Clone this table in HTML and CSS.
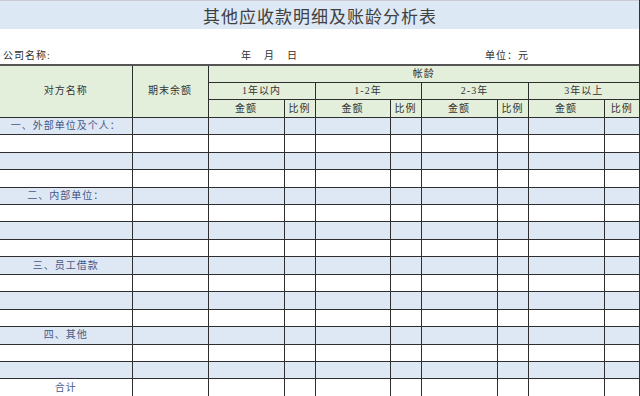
FILE: index.html
```html
<!DOCTYPE html>
<html lang="zh-CN">
<head>
<meta charset="utf-8">
<title>其他应收款明细及账龄分析表</title>
<link rel="stylesheet" href="styles.css">
</head>
<body>
<div class="sheet">
  <div class="title">其他应收款明细及账龄分析表</div>
  <div class="info">
    <span class="company">公司名称:</span>
    <span class="date"><span class="d">年</span><span class="d">月</span><span class="d">日</span></span>
    <span class="unit">单位：元</span>
  </div>
  <table class="grid">
    <colgroup>
      <col class="c-name"><col class="c-bal">
      <col class="c-amt"><col class="c-pct">
      <col class="c-amt2"><col class="c-pct">
      <col class="c-amt"><col class="c-pct">
      <col class="c-amt"><col class="c-last">
    </colgroup>
    <thead>
      <tr class="h">
        <th rowspan="3">对方名称</th>
        <th rowspan="3">期末余额</th>
        <th colspan="8" class="end">帐龄</th>
      </tr>
      <tr class="h">
        <th colspan="2">1年以内</th>
        <th colspan="2">1-2年</th>
        <th colspan="2">2-3年</th>
        <th colspan="2" class="end">3年以上</th>
      </tr>
      <tr class="h">
        <th>金额</th><th>比例</th>
        <th>金额</th><th>比例</th>
        <th>金额</th><th>比例</th>
        <th>金额</th><th class="end">比例</th>
      </tr>
    </thead>
    <tbody>
      <tr class="blue"><td class="label">一、外部单位及个人：</td><td></td><td></td><td></td><td></td><td></td><td></td><td></td><td></td><td class="end"></td></tr>
      <tr><td></td><td></td><td></td><td></td><td></td><td></td><td></td><td></td><td></td><td class="end"></td></tr>
      <tr class="blue"><td></td><td></td><td></td><td></td><td></td><td></td><td></td><td></td><td></td><td class="end"></td></tr>
      <tr><td></td><td></td><td></td><td></td><td></td><td></td><td></td><td></td><td></td><td class="end"></td></tr>
      <tr class="blue"><td class="label">二、内部单位：</td><td></td><td></td><td></td><td></td><td></td><td></td><td></td><td></td><td class="end"></td></tr>
      <tr><td></td><td></td><td></td><td></td><td></td><td></td><td></td><td></td><td></td><td class="end"></td></tr>
      <tr class="blue"><td></td><td></td><td></td><td></td><td></td><td></td><td></td><td></td><td></td><td class="end"></td></tr>
      <tr><td></td><td></td><td></td><td></td><td></td><td></td><td></td><td></td><td></td><td class="end"></td></tr>
      <tr class="blue"><td class="label">三、员工借款</td><td></td><td></td><td></td><td></td><td></td><td></td><td></td><td></td><td class="end"></td></tr>
      <tr><td></td><td></td><td></td><td></td><td></td><td></td><td></td><td></td><td></td><td class="end"></td></tr>
      <tr class="blue"><td></td><td></td><td></td><td></td><td></td><td></td><td></td><td></td><td></td><td class="end"></td></tr>
      <tr><td></td><td></td><td></td><td></td><td></td><td></td><td></td><td></td><td></td><td class="end"></td></tr>
      <tr class="blue"><td class="label">四、其他</td><td></td><td></td><td></td><td></td><td></td><td></td><td></td><td></td><td class="end"></td></tr>
      <tr><td></td><td></td><td></td><td></td><td></td><td></td><td></td><td></td><td></td><td class="end"></td></tr>
      <tr class="blue"><td></td><td></td><td></td><td></td><td></td><td></td><td></td><td></td><td></td><td class="end"></td></tr>
      <tr><td class="label">合计</td><td></td><td></td><td></td><td></td><td></td><td></td><td></td><td></td><td class="end"></td></tr>
    </tbody>
  </table>
</div>
</body>
</html>
```

FILE: styles.css
```css
html, body {
  margin: 0;
  padding: 0;
  background: #ffffff;
}

body {
  font-family: "Liberation Serif", "Noto Sans CJK SC", serif;
  color: #333333;
  overflow: hidden;
}

.sheet {
  width: 639px;
  height: 396px;
  border-right: 1px solid #333333;
  position: relative;
  overflow: hidden;
}

.title {
  height: 28px;
  border-top: 1px solid #c8ccd2;
  background: #dce8f4;
  display: flex;
  align-items: center;
  justify-content: center;
  font-size: 17px;
  letter-spacing: 1px;
  padding-left: 1px;
  color: #404040;
}

.info {
  height: 35px;
  display: flex;
  align-items: flex-end;
  padding-bottom: 1px;
  box-sizing: border-box;
  font-size: 10px;
  line-height: 14px;
  letter-spacing: 1px;
  color: #2f2f2f;
}

.company {
  width: 241px;
  padding-left: 3px;
  box-sizing: border-box;
  flex: none;
}

.date {
  width: 244px;
  flex: none;
  display: flex;
}

.d {
  margin-right: 12px;
}

.unit {
  flex: none;
}

.grid {
  width: 639px;
  table-layout: fixed;
  border-collapse: collapse;
  font-size: 10px;
  letter-spacing: 1px;
}

.c-name { width: 132px; }
.c-bal { width: 76px; }
.c-amt { width: 76px; }
.c-amt2 { width: 75px; }
.c-pct { width: 31px; }
.c-last { width: 35px; }

.grid tr {
  height: 17.45px;
}

.grid th,
.grid td {
  padding: 0;
  border: 1px solid #2e2e2e;
  text-align: center;
  vertical-align: middle;
  font-weight: normal;
  line-height: 12px;
  white-space: nowrap;
  overflow: hidden;
}

.grid tr > :first-child {
  border-left: none;
}

.grid .end {
  border-right: none;
}

.grid thead tr:first-child th {
  border-top: 2px solid #555555;
}

.grid thead th {
  background: #e3efda;
  color: #333333;
}

.grid tbody tr.blue td {
  background: #dde8f4;
}

.grid td.label {
  color: #46598a;
}
```
